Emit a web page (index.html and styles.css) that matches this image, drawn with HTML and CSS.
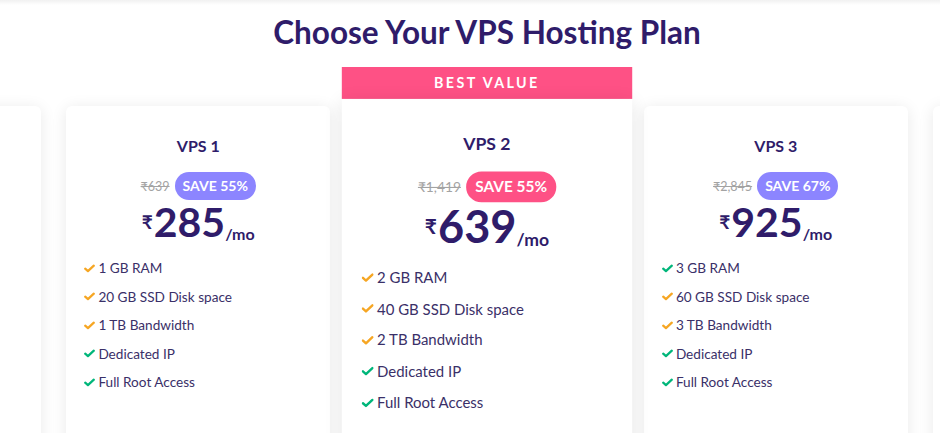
FILE: index.html
```html
<!DOCTYPE html>
<html lang="en">
<head>
<meta charset="utf-8">
<title>Choose Your VPS Hosting Plan</title>
<link rel="stylesheet" href="styles.css">
</head>
<body>
<div class="page">
  <h1 class="heading">Choose Your VPS Hosting Plan</h1>
  <div class="row">
    <div class="card ghost"></div>

    <div class="card">
      <h2 class="plan">VPS 1</h2>
      <div class="deal"><span class="old">₹639</span><span class="save purple">SAVE 55%</span></div>
      <div class="price"><span class="cur">₹</span><span class="amt">285</span><span class="per">/mo</span></div>
      <ul class="feats">
        <li><svg class="chk orange" viewBox="0 0 12 9"><path d="M1.3 4.7 4.3 7.4 10.7 1.4"/></svg>1 GB RAM</li>
        <li><svg class="chk orange" viewBox="0 0 12 9"><path d="M1.3 4.7 4.3 7.4 10.7 1.4"/></svg>20 GB SSD Disk space</li>
        <li><svg class="chk orange" viewBox="0 0 12 9"><path d="M1.3 4.7 4.3 7.4 10.7 1.4"/></svg>1 TB Bandwidth</li>
        <li><svg class="chk green" viewBox="0 0 12 9"><path d="M1.3 4.7 4.3 7.4 10.7 1.4"/></svg>Dedicated IP</li>
        <li><svg class="chk green" viewBox="0 0 12 9"><path d="M1.3 4.7 4.3 7.4 10.7 1.4"/></svg>Full Root Access</li>
      </ul>
    </div>

    <div class="featured">
      <div class="banner">BEST VALUE</div>
      <div class="card top-flat">
        <h2 class="plan">VPS 2</h2>
        <div class="deal"><span class="old">₹1,419</span><span class="save pink">SAVE 55%</span></div>
        <div class="price"><span class="cur">₹</span><span class="amt">639</span><span class="per">/mo</span></div>
        <ul class="feats">
          <li><svg class="chk orange" viewBox="0 0 12 9"><path d="M1.3 4.7 4.3 7.4 10.7 1.4"/></svg>2 GB RAM</li>
          <li><svg class="chk orange" viewBox="0 0 12 9"><path d="M1.3 4.7 4.3 7.4 10.7 1.4"/></svg>40 GB SSD Disk space</li>
          <li><svg class="chk orange" viewBox="0 0 12 9"><path d="M1.3 4.7 4.3 7.4 10.7 1.4"/></svg>2 TB Bandwidth</li>
          <li><svg class="chk green" viewBox="0 0 12 9"><path d="M1.3 4.7 4.3 7.4 10.7 1.4"/></svg>Dedicated IP</li>
          <li><svg class="chk green" viewBox="0 0 12 9"><path d="M1.3 4.7 4.3 7.4 10.7 1.4"/></svg>Full Root Access</li>
        </ul>
      </div>
    </div>

    <div class="card">
      <h2 class="plan">VPS 3</h2>
      <div class="deal"><span class="old">₹2,845</span><span class="save purple">SAVE 67%</span></div>
      <div class="price"><span class="cur">₹</span><span class="amt">925</span><span class="per">/mo</span></div>
      <ul class="feats">
        <li><svg class="chk green" viewBox="0 0 12 9"><path d="M1.3 4.7 4.3 7.4 10.7 1.4"/></svg>3 GB RAM</li>
        <li><svg class="chk orange" viewBox="0 0 12 9"><path d="M1.3 4.7 4.3 7.4 10.7 1.4"/></svg>60 GB SSD Disk space</li>
        <li><svg class="chk orange" viewBox="0 0 12 9"><path d="M1.3 4.7 4.3 7.4 10.7 1.4"/></svg>3 TB Bandwidth</li>
        <li><svg class="chk green" viewBox="0 0 12 9"><path d="M1.3 4.7 4.3 7.4 10.7 1.4"/></svg>Dedicated IP</li>
        <li><svg class="chk green" viewBox="0 0 12 9"><path d="M1.3 4.7 4.3 7.4 10.7 1.4"/></svg>Full Root Access</li>
      </ul>
    </div>

    <div class="card ghost"></div>
  </div>
</div>
</body>
</html>
```

FILE: styles.css
```css
html, body {
  margin: 0;
  padding: 0;
}
body {
  width: 940px;
  height: 433px;
  overflow: hidden;
  background: linear-gradient(#f1f1f1, #ffffff 5px);
  font-family: "Lato", "Noto Sans", "DejaVu Sans", sans-serif;
  color: #2f1c6a;
}
.page {
  padding-left: 34px;
  box-sizing: border-box;
  width: 940px;
}
.heading {
  margin: 14px 0 0;
  text-align: center;
  font-size: 31.5px;
  line-height: 36px;
  font-weight: 700;
  color: #2f1c6a;
}
.row {
  display: flex;
  justify-content: center;
  align-items: flex-start;
  gap: 25px;
  margin-top: 17px;
}
.card {
  flex: 0 0 263.75px;
  width: 263.75px;
  height: 400px;
  box-sizing: border-box;
  background: #fff;
  border-radius: 6px;
  box-shadow: 0 2px 16px rgba(0, 0, 0, 0.09);
  padding: 30px 18px 0;
  margin-top: 39px;
  text-align: center;
}
.featured {
  flex: 0 0 263.75px;
  width: 263.75px;
  transform: scale(1.1);
  transform-origin: top center;
  position: relative;
  z-index: 1;
}
.banner {
  height: 29px;
  background: #fe5185;
  color: #fff;
  font-size: 13px;
  font-weight: 700;
  letter-spacing: 2.2px;
  line-height: 29px;
  text-align: center;
}
.card.top-flat {
  margin-top: 0;
  border-radius: 0 0 6px 6px;
}
.plan {
  margin: 0;
  font-size: 16px;
  line-height: 20px;
  font-weight: 700;
  color: #2f1c6a;
}
.deal {
  margin-top: 16px;
  height: 28px;
  display: flex;
  justify-content: center;
  align-items: center;
  gap: 5px;
}
.old {
  font-size: 12.5px;
  color: #a3a3a3;
  text-decoration: line-through;
}
.save {
  height: 28px;
  line-height: 28px;
  padding: 0 8px;
  border-radius: 14px;
  color: #fff;
  font-size: 14px;
  font-weight: 700;
}
.save.purple { background: #8c85ff; }
.save.pink { background: #fe5185; }
.price {
  margin-top: 2px;
  display: flex;
  justify-content: center;
  align-items: flex-start;
  height: 40px;
  font-weight: 700;
  color: #2f1c6a;
}
.cur {
  font-size: 19px;
  line-height: 19px;
  margin-top: 10px;
  margin-right: 1px;
}
.amt {
  font-size: 41px;
  line-height: 40px;
}
.per {
  font-size: 16px;
  line-height: 16px;
  margin-top: 24px;
}
.feats {
  list-style: none;
  margin: 12px 0 0;
  padding: 0;
  text-align: left;
}
.feats li {
  display: flex;
  align-items: center;
  height: 28.5px;
  font-size: 13.6px;
  color: #3a3068;
}
.chk {
  width: 11px;
  height: 9px;
  margin-right: 3px;
  flex: 0 0 11px;
  fill: none;
  stroke-width: 2.4;
  stroke-linecap: round;
  stroke-linejoin: round;
}
.chk.orange { stroke: #f6a623; }
.chk.green { stroke: #00b67a; }
```
